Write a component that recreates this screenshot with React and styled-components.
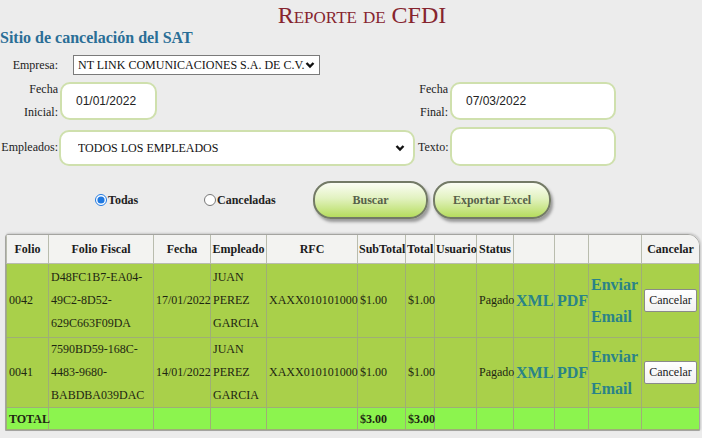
import React from 'react';
import styled, { createGlobalStyle } from 'styled-components';

const GlobalStyle = createGlobalStyle`
    body {
        margin: 0;
        background: #ececec;
        font-family: "Liberation Serif", "Times New Roman", serif;
        color: #222;
    }
`

const Page = styled.div`
    width: 702px;
    height: 438px;
    overflow: hidden;
`

const Title = styled.h1`
    margin: 0;
    padding: 3px 0 0 22px;
    font-size: 24px;
    line-height: 25px;
    font-weight: normal;
    font-variant: small-caps;
    text-align: center;
    color: #86242e;
`

const Heading = styled.h2`
    margin: 0;
    font-size: 16px;
    line-height: 20px;
    font-weight: bold;
    color: #2a6e96;
`

const Form = styled.div`
    display: grid;
    grid-template-columns: 58px 360px 30px 168px;
    row-gap: 7px;
    margin-top: 7px;
    align-items: center;
`

// two-line labels keep the height of the input beside them
const Label = styled.div`
    display: flex;
    flex-direction: column;
    justify-content: center;
    height: ${props => props.tall ? '38px' : 'auto'};
    font-size: 12px;
    line-height: ${props => props.tall ? '23px' : '16px'};
    text-align: right;
    color: #222;
`

const Cell = styled.div`
    display: flex;
    align-items: center;
    grid-column: ${props => props.span ? props.span : 'auto'};
    padding-left: ${props => props.indent || 0}px;
`

const SquareSelect = styled.div`
    display: flex;
    align-items: center;
    width: 247px;
    height: 20px;
    box-sizing: border-box;
    border: 1px solid #7a7a7a;
    background: #fff;
    padding: 0 4px 0 4px;
`

const RoundSelect = styled.div`
    display: flex;
    align-items: center;
    width: ${props => props.width}px;
    height: 36px;
    margin-top: 2px;
    box-sizing: border-box;
    border: 2px solid #cfe0ad;
    border-radius: 10px;
    background: #fff;
    padding: 0 8px 0 17px;
`

const NativeSelect = styled.select`
    appearance: none;
    flex: 1;
    border: none;
    background: transparent;
    font-family: "Liberation Serif", serif;
    font-size: 12px;
    color: #111;
    padding: 0;
    outline: none;
`

const TextInput = styled.input`
    width: ${props => props.width}px;
    height: ${props => props.height || 38}px;
    box-sizing: border-box;
    border: 2px solid #cfe0ad;
    border-radius: 10px;
    background: #fff;
    padding: 0 0 0 14px;
    font-family: "Liberation Sans", Arial, sans-serif;
    font-size: 12px;
    color: #222;
`

const Chevron = () =>
    <svg width="10" height="8" viewBox="0 0 10 8">
        <polyline points="1.5,2 5,5.5 8.5,2" fill="none" stroke="#111" strokeWidth="2.4" />
    </svg>

const Actions = styled.div`
    display: flex;
    align-items: center;
    margin: 15px 0 0 95px;
    height: 38px;
`

const RadioOption = styled.label`
    display: flex;
    align-items: center;
    width: ${props => props.width}px;
    font-size: 12px;
    font-weight: bold;
    color: #222;

    input {
        margin: 0 1px 0 0;
        width: 12px;
        height: 12px;
        accent-color: #1f78e0;
    }
`

const GreenButton = styled.button`
    width: ${props => props.width}px;
    height: 38px;
    margin-right: 5px;
    border: 2px solid #737a66;
    border-radius: 18px;
    background: linear-gradient(#fbfdf4 0%, #e2f2c0 45%, #b6dd5e 100%);
    box-shadow: 2px 3px 3px rgba(0, 0, 0, 0.35);
    font-family: "Liberation Serif", serif;
    font-size: 12px;
    font-weight: bold;
    color: #56604a;
`

const TableWrap = styled.div`
    margin: 15px 0 0 5px;
    width: 693px;
    border: 1px solid #a4a4a0;
    border-radius: 3px 12px 0 0;
    overflow: hidden;
    box-shadow: 1px -1px 2px rgba(0, 0, 0, 0.15);
`

const Table = styled.table`
    width: 693px;
    border-collapse: collapse;
    table-layout: fixed;
    font-size: 12px;
`

const Th = styled.th`
    height: 28px;
    padding: 0 1px;
    background: #f3f3f1;
    border: 1px solid #b9bcae;
    border-top: none;
    font-weight: bold;
    color: #1b1b1b;
    text-align: center;
    white-space: nowrap;
`

const Row = styled.tr`
    height: ${props => props.height}px;
    background: ${props => props.total ? '#8cf44e' : '#a9d04a'};
`

const Td = styled.td`
    padding: 0 2px;
    border: 1px solid #9fae76;
    line-height: ${props => props.total ? '18px' : '23px'};
    color: #1e2612;
    vertical-align: middle;
    font-weight: ${props => props.bold ? 'bold' : 'normal'};
    white-space: ${props => props.nowrap ? 'nowrap' : 'normal'};
`

const LinkText = styled.span`
    display: block;
    font-size: 16px;
    font-weight: bold;
    line-height: ${props => props.lh || 20}px;
    color: #2a8388;
`

const CancelButton = styled.button`
    width: 53px;
    height: 23px;
    padding: 0;
    border: 1px solid #8a8a8a;
    border-radius: 2px;
    background: linear-gradient(#ffffff, #f1f1f1);
    font-family: "Liberation Serif", serif;
    font-size: 12px;
    color: #222;
`

const columns = [
    ['Folio', 42], ['Folio Fiscal', 105], ['Fecha', 57], ['Empleado', 56], ['RFC', 91],
    ['SubTotal', 48], ['Total', 29], ['Usuario', 42], ['Status', 37], ['', 41],
    ['', 34], ['', 53], ['Cancelar', 58]
]

const rows = [
    { folio: '0042', uuid: 'D48FC1B7-EA04-49C2-8D52-629C663F09DA', fecha: '17/01/2022', height: 74 },
    { folio: '0041', uuid: '7590BD59-168C-4483-9680-BABDBA039DAC', fecha: '14/01/2022', height: 70 },
]

const App = () =>
    <Page>
        <GlobalStyle />
        <Title>Reporte de CFDI</Title>
        <Heading>Sitio de cancelación del SAT</Heading>
        <Form>
            <Label>Empresa:</Label>
            <Cell span="2 / 5" indent={15}>
                <SquareSelect>
                    <NativeSelect defaultValue="nt">
                        <option value="nt">NT LINK COMUNICACIONES S.A. DE C.V.</option>
                    </NativeSelect>
                    <Chevron />
                </SquareSelect>
            </Cell>

            <Label tall><span>Fecha</span><span>Inicial:</span></Label>
            <Cell indent={2}>
                <TextInput width={97} defaultValue="01/01/2022" />
            </Cell>
            <Label tall><span>Fecha</span><span>Final:</span></Label>
            <Cell indent={2}>
                <TextInput width={166} defaultValue="07/03/2022" />
            </Cell>

            <Label>Empleados:</Label>
            <Cell indent={1}>
                <RoundSelect width={356}>
                    <NativeSelect defaultValue="all">
                        <option value="all">TODOS LOS EMPLEADOS</option>
                    </NativeSelect>
                    <Chevron />
                </RoundSelect>
            </Cell>
            <Label>Texto:</Label>
            <Cell indent={2}>
                <TextInput width={166} height={39} />
            </Cell>
        </Form>

        <Actions>
            <RadioOption width={109}>
                <input type="radio" name="tipo" defaultChecked />Todas
            </RadioOption>
            <RadioOption width={109}>
                <input type="radio" name="tipo" />Canceladas
            </RadioOption>
            <GreenButton width={115}>Buscar</GreenButton>
            <GreenButton width={118}>Exportar Excel</GreenButton>
        </Actions>

        <TableWrap>
            <Table>
                <colgroup>
                    {columns.map(([, w], i) => <col key={i} style={{ width: w }} />)}
                </colgroup>
                <thead>
                    <tr>
                        {columns.map(([name], i) => <Th key={i}>{name}</Th>)}
                    </tr>
                </thead>
                <tbody>
                    {rows.map(r =>
                        <Row key={r.folio} height={r.height}>
                            <Td>{r.folio}</Td>
                            <Td>{r.uuid.replace(/-/g, '-\u200B')}</Td>
                            <Td nowrap>{r.fecha}</Td>
                            <Td>JUAN PEREZ GARCIA</Td>
                            <Td nowrap>XAXX010101000</Td>
                            <Td>$1.00</Td>
                            <Td>$1.00</Td>
                            <Td></Td>
                            <Td>Pagado</Td>
                            <Td><LinkText>XML</LinkText></Td>
                            <Td><LinkText>PDF</LinkText></Td>
                            <Td><LinkText lh={32}>Enviar Email</LinkText></Td>
                            <Td><CancelButton>Cancelar</CancelButton></Td>
                        </Row>
                    )}
                    <Row total height={22}>
                        <Td total bold>TOTAL</Td>
                        <Td total></Td><Td total></Td><Td total></Td><Td total></Td>
                        <Td total bold>$3.00</Td>
                        <Td total bold>$3.00</Td>
                        <Td total></Td><Td total></Td><Td total></Td><Td total></Td><Td total></Td><Td total></Td>
                    </Row>
                </tbody>
            </Table>
        </TableWrap>
    </Page>

export default App;
